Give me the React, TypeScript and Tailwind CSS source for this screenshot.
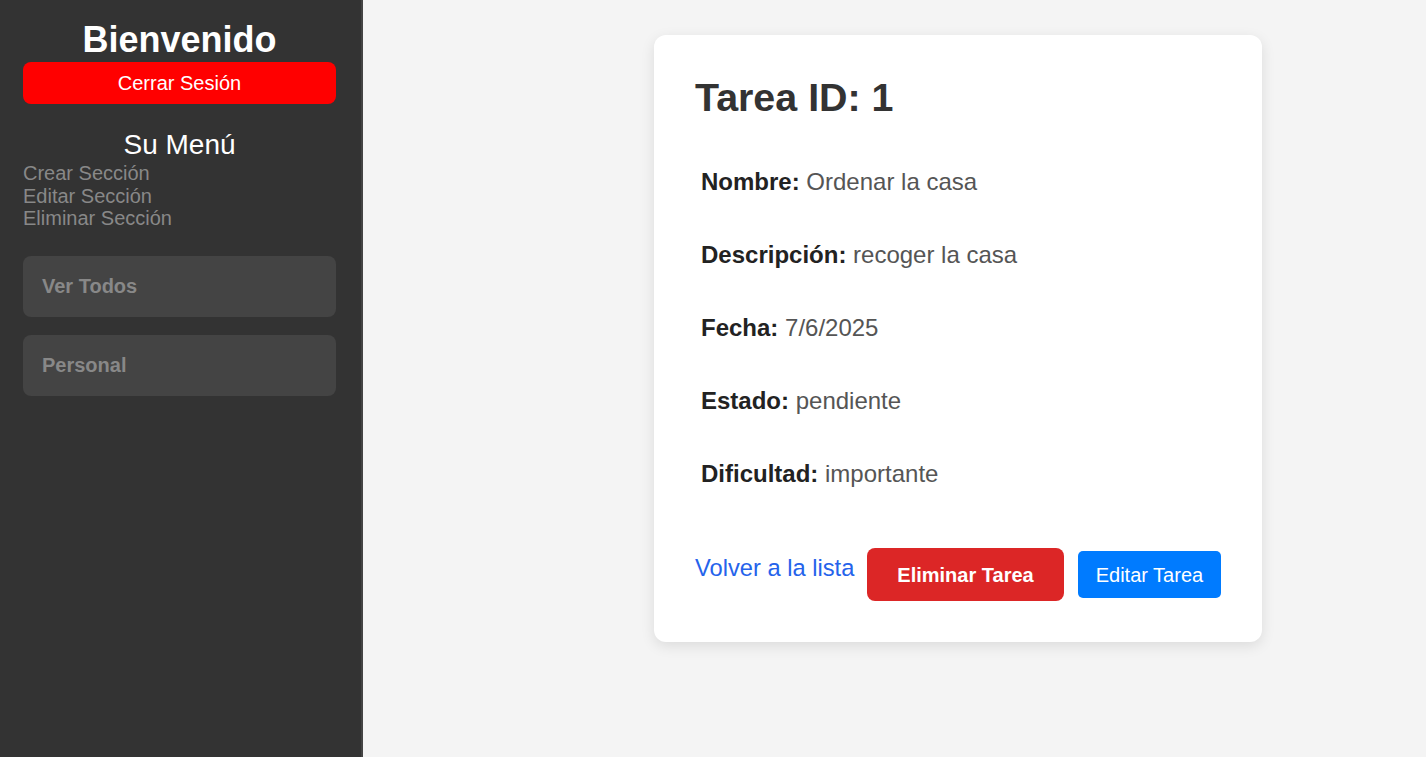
export default function App() {
  const campos = [
    { label: 'Nombre:', value: 'Ordenar la casa' },
    { label: 'Descripción:', value: 'recoger la casa' },
    { label: 'Fecha:', value: '7/6/2025' },
    { label: 'Estado:', value: 'pendiente' },
    { label: 'Dificultad:', value: 'importante' },
  ];

  return (
    <div className="flex min-h-[757px] w-full bg-[#f4f4f4] font-['Liberation_Sans',Arial,sans-serif]">
      {/* sidebar */}
      <aside className="w-[363px] shrink-0 bg-[#333333] border-r-2 border-[#444444] pl-[23px] pr-[25px] pt-[21px]">
        <h1 className="text-center text-[36px] font-bold leading-[38px] text-white">Bienvenido</h1>
        <button className="mt-[3px] h-[42px] w-full rounded-[8px] bg-[#ff0000] text-[20px] text-white">
          Cerrar Sesión
        </button>
        <h2 className="mt-[27px] text-center text-[28px] leading-[28px] text-white">Su Menú</h2>
        <ul className="mt-[3px] text-[20px] leading-[22.5px] text-[#888888]">
          <li>Crear Sección</li>
          <li>Editar Sección</li>
          <li>Eliminar Sección</li>
        </ul>
        <div className="mt-[26px] flex flex-col gap-[18px]">
          {['Ver Todos', 'Personal'].map((s) => (
            <div
              key={s}
              className="flex h-[61px] items-center rounded-[8px] bg-[#444444] px-[19px] text-[20px] font-bold text-[#888888]"
            >
              {s}
            </div>
          ))}
        </div>
      </aside>

      {/* main */}
      <main className="flex flex-1 justify-center pl-[127px] pt-[35px]">
        <div className="h-fit w-[608px] rounded-[12px] bg-white px-[41px] pb-[41px] pt-[40px] shadow-[0_4px_14px_rgba(0,0,0,0.1)]">
          <h2 className="text-[39.4px] font-bold leading-[44px] text-[#333333]">Tarea ID: 1</h2>
          <div className="mt-[36px] flex flex-col gap-[20px]">
            {campos.map((c) => (
              <p key={c.label} className="ml-[6px] py-[13px] text-[24px] leading-[27px] text-[#555555]">
                <strong className="text-[#222222]">{c.label}</strong> {c.value}
              </p>
            ))}
          </div>
          <div className="mt-[48px] flex items-center whitespace-nowrap">
            <a href="#" className="shrink-0 pb-[12px] text-[23.7px] text-[#2563eb]">
              Volver a la lista
            </a>
            <button className="ml-[13px] h-[53px] shrink-0 rounded-[8px] bg-[#dc2626] px-[30px] text-[20px] font-bold text-white">
              Eliminar Tarea
            </button>
            <button className="ml-[14px] h-[47px] shrink-0 rounded-[5px] bg-[#007bff] px-[18px] text-[20px] text-white">
              Editar Tarea
            </button>
          </div>
        </div>
      </main>
    </div>
  );
}
